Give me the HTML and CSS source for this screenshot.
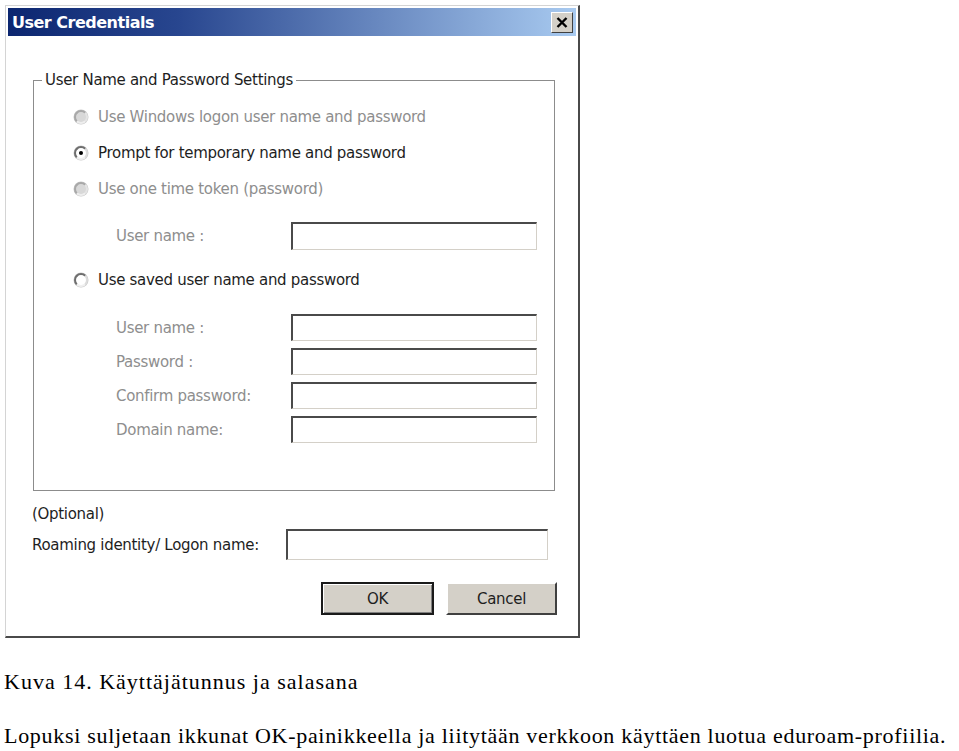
FILE: index.html
```html
<!DOCTYPE html>
<html>
<head>
<meta charset="utf-8">
<link rel="stylesheet" href="styles.css">
</head>
<body>
<div class="page">
  <div class="window">
    <div class="titlebar">
      <span class="title">User Credentials</span>
      <span class="close">
        <svg width="12" height="11" viewBox="0 0 12 11"><path d="M1.5 1 L10.5 10 M10.5 1 L1.5 10" stroke="#000" stroke-width="2.4" fill="none"/></svg>
      </span>
    </div>
    <div class="body">
      <fieldset class="group">
        <legend>User Name and Password Settings</legend>
        <div class="radio-row disabled"><span class="radio"></span>Use Windows logon user name and password</div>
        <div class="radio-row"><span class="radio checked"></span>Prompt for temporary name and password</div>
        <div class="radio-row disabled"><span class="radio"></span>Use one time token (password)</div>
        <div class="field-row first-single"><span class="label">User name :</span><span class="field"></span></div>
        <div class="radio-row saved"><span class="radio"></span>Use saved user name and password</div>
        <div class="fields">
          <div class="field-row"><span class="label">User name :</span><span class="field"></span></div>
          <div class="field-row"><span class="label">Password :</span><span class="field"></span></div>
          <div class="field-row"><span class="label">Confirm password:</span><span class="field"></span></div>
          <div class="field-row"><span class="label">Domain name:</span><span class="field"></span></div>
        </div>
      </fieldset>
      <div class="optional">(Optional)</div>
      <div class="roam-row"><span class="roam-label">Roaming identity/ Logon name:</span><span class="field wide"></span></div>
      <div class="buttons">
        <span class="btn default">OK</span>
        <span class="btn">Cancel</span>
      </div>
    </div>
  </div>
  <p class="caption">Kuva 14. Käyttäjätunnus ja salasana</p>
  <p class="para">Lopuksi suljetaan ikkunat OK-painikkeella ja liitytään verkkoon käyttäen luotua eduroam-profiilia.</p>
</div>
</body>
</html>
```
FILE: styles.css
```css
html, body {
  margin: 0;
  padding: 0;
  background: #fff;
}

.page {
  padding: 5px 0 0 0;
}

.window {
  margin-left: 5px;
  width: 575px;
  height: 633px;
  box-sizing: border-box;
  border-top: 1px solid #d4d4d4;
  border-left: 1px solid #d4d4d4;
  border-right: 2px solid #4a4a4a;
  border-bottom: 2px solid #4a4a4a;
  padding: 2px;
  background: #fff;
  font-family: "DejaVu Sans", Verdana, sans-serif;
  font-size: 15px;
  letter-spacing: -0.3px;
  color: #1e1e1e;
}

.titlebar {
  height: 28px;
  display: flex;
  align-items: center;
  justify-content: space-between;
  background: linear-gradient(to right, #0c2670 0%, #28468f 30%, #a8caf0 100%);
  padding: 0 3px 0 4px;
}

.title {
  color: #fff;
  font-weight: bold;
  font-size: 16px;
  letter-spacing: -0.5px;
}

.close {
  width: 22px;
  height: 21px;
  box-sizing: border-box;
  display: flex;
  align-items: center;
  justify-content: center;
  background: #d4d0c8;
  border: 1px solid;
  border-color: #fff #404040 #404040 #fff;
}

.body {
  padding-top: 35px;
}

.group {
  margin: 0 21px 0 25px;
  border: 1px solid #8c8c8c;
  padding: 10px 0 47px 0;
}

.group legend {
  margin-left: 8px;
  padding: 0 3px;
  line-height: 18px;
}

.radio-row {
  height: 36px;
  display: flex;
  align-items: center;
  padding-left: 40px;
}

.radio-row.disabled {
  color: #8e8e8e;
}

.radio-row.saved {
  margin-top: 12px;
}

.radio {
  width: 14px;
  height: 14px;
  box-sizing: border-box;
  border-radius: 50%;
  border: 2px solid;
  border-color: #6e6e6e #dcdcdc #f0f0f0 #6e6e6e;
  box-shadow: 0 0 0 0.5px #c8c8c8;
  background: #fff;
  margin-right: 10px;
  display: flex;
  align-items: center;
  justify-content: center;
  flex: none;
}

.disabled .radio {
  border-color: #a8a8a8 #e4e4e4 #eeeeee #a8a8a8;
  background: #d8d8d8;
}

.radio.checked::after {
  content: "";
  width: 4px;
  height: 4px;
  border-radius: 50%;
  background: #000;
}

.field-row {
  display: flex;
  align-items: center;
  height: 27px;
  padding-left: 82px;
}

.field-row.first-single {
  height: 28px;
  margin-top: 15px;
}

.label {
  width: 175px;
  color: #8e8e8e;
}

.fields {
  margin-top: 16px;
  display: flex;
  flex-direction: column;
  gap: 7px;
}

.field {
  width: 246px;
  height: 100%;
  box-sizing: border-box;
  border-style: solid;
  border-width: 2px 1px 1px 2px;
  border-color: #4a4a4a #d4d0c8 #d4d0c8 #4a4a4a;
  background: #fff;
}

.optional {
  margin: 14px 0 0 24px;
  line-height: 18px;
}

.roam-row {
  display: flex;
  align-items: center;
  height: 31px;
  margin: 6px 0 0 24px;
}

.roam-label {
  width: 254px;
}

.field.wide {
  width: 262px;
}

.buttons {
  display: flex;
  justify-content: flex-end;
  gap: 12px;
  margin: 22px 19px 0 0;
}

.btn {
  width: 111px;
  height: 33px;
  box-sizing: border-box;
  display: flex;
  align-items: center;
  justify-content: center;
  background: #d4d0c8;
  border: 2px solid;
  border-color: #fff #404040 #404040 #fff;
}

.btn.default {
  width: 113px;
  border: 2px solid #1a1a1a;
  box-shadow: inset 1px 1px 0 #fff, inset -1px -1px 0 #808080;
}

.caption {
  margin: 32px 0 0 4px;
  font-family: "Liberation Serif", "Times New Roman", serif;
  font-size: 22px;
  line-height: 24px;
  letter-spacing: 1px;
  color: #000;
}

.para {
  margin: 30px 0 0 4px;
  font-family: "Liberation Serif", "Times New Roman", serif;
  font-size: 22px;
  line-height: 24px;
  letter-spacing: 0.7px;
  color: #000;
  white-space: nowrap;
}
```
